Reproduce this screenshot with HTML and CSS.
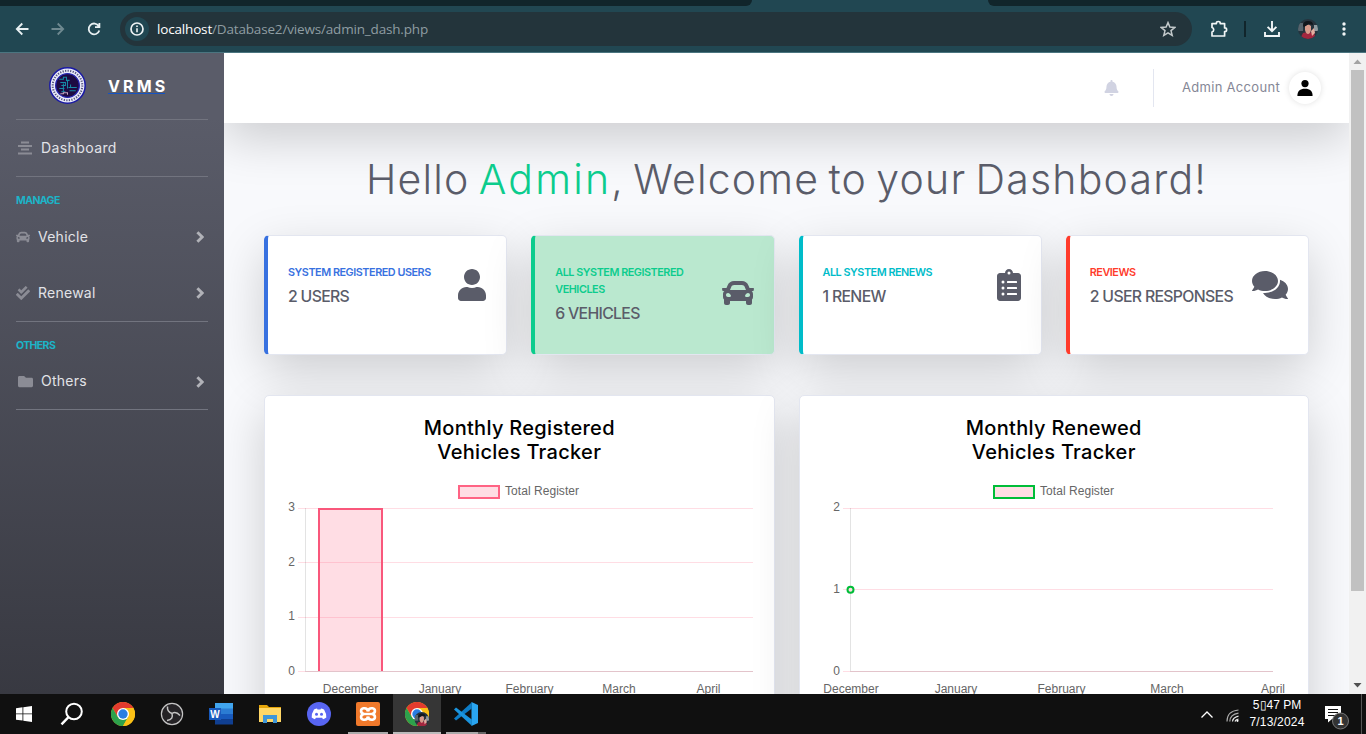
FILE: index.html
```html
<!DOCTYPE html>
<html lang="en">
<head>
<meta charset="utf-8">
<title>VRMS Dashboard</title>
<link rel="stylesheet" href="styles.css">
</head>
<body>
<svg class="defs" aria-hidden="true">
  <defs>
    <symbol id="car" viewBox="0 0 512 512"><path d="M499.99 176h-59.87l-16.64-41.6C406.38 91.63 365.57 64 319.5 64h-127c-46.06 0-86.88 27.63-103.99 70.4L71.87 176H12.01C4.2 176-1.53 183.34.37 190.91l6 24C7.7 220.25 12.5 224 18.01 224h20.07C24.65 235.73 16 252.78 16 272v48c0 16.12 6.16 30.67 16 41.93V416c0 17.67 14.33 32 32 32h32c17.67 0 32-14.33 32-32v-32h256v32c0 17.67 14.33 32 32 32h32c17.67 0 32-14.33 32-32v-54.07c9.84-11.25 16-25.8 16-41.93v-48c0-19.22-8.65-36.27-22.07-48H494c5.51 0 10.31-3.75 11.64-9.09l6-24c1.89-7.57-3.84-14.91-11.65-14.91zm-352.06-17.83c7.29-18.22 24.94-30.17 44.57-30.17h127c19.63 0 37.28 11.95 44.57 30.17L384 208H128l19.93-49.83zM96 319.8c-19.2 0-32-12.76-32-31.9S76.8 256 96 256s48 28.71 48 47.85-28.8 15.95-48 15.95zm320 0c-19.2 0-48 3.19-48-15.95S396.8 256 416 256s32 12.76 32 31.9-12.8 31.9-32 31.9z"/></symbol>
    <symbol id="chev" viewBox="0 0 8 12"><path d="M1.4 1.2 6.2 6 1.4 10.8" fill="none" stroke="currentColor" stroke-width="2.9"/></symbol>
    <symbol id="chrome" viewBox="0 0 48 48">
      <circle cx="24" cy="24" r="24" fill="#fbc116"/>
      <path d="M3.2 12A24 24 0 0 1 44.8 12L24 12 24 24 13.6 30Z" fill="#e33b2e"/>
      <path d="M3.2 12A24 24 0 0 0 24 48L34.4 30 24 24 13.6 30Z" fill="#2da14c"/>
      <path d="M44.8 12H24v12l10.4 6L24 48A24 24 0 0 0 44.8 12Z" fill="#fbc116"/>
      <circle cx="24" cy="24" r="12" fill="#fff"/><circle cx="24" cy="24" r="9.4" fill="#2a7de1"/>
    </symbol>
    <symbol id="face" viewBox="0 0 20 20">
      <clipPath id="fc"><circle cx="10" cy="10" r="10"/></clipPath>
      <g clip-path="url(#fc)"><rect width="20" height="20" fill="#26333d"/><path d="M0 4h5v8H0z" fill="#56646d"/><path d="M16 6h4v6h-4z" fill="#8f9ba1"/><path d="M2 20 5 14l5-1 6 1 2 6z" fill="#a3263f"/><path d="M7 7q3-3 6 0v4q-1 4-3 4t-3-4z" fill="#d99b8c"/><path d="M5 7q0-5 5-5t5 4l-4-1-5 3z" fill="#11161c"/><path d="M13 12l3-3 1 5-3 3z" fill="#e5ada0"/></g>
    </symbol>
  </defs>
</svg>

<header class="browser">
  <div class="tabstrip"><div class="tab-left"></div><div class="tab-right"></div></div>
  <div class="toolbar">
    <svg class="tool back" viewBox="0 0 14 14"><path d="M13.5 7H2M7.3 1.5 1.8 7l5.5 5.5" stroke="#e8f0f2"/></svg>
    <svg class="tool fwd" viewBox="0 0 14 14"><path d="M.5 7H12M6.7 1.5 12.2 7l-5.5 5.5" stroke="#6f8990"/></svg>
    <svg class="tool reload" viewBox="0 0 14 14"><path d="M11.8 4.2A5.4 5.4 0 1 0 12.3 8.5M12.4 1v4.2H8" stroke="#e8f0f2"/></svg>
    <div class="omnibox">
      <span class="info"><svg viewBox="0 0 14 14"><circle cx="7" cy="7" r="6" fill="none" stroke="#eef3f4" stroke-width="1.7"/><path d="M7 6.2v4M7 3.4v1.5" stroke="#eef3f4" stroke-width="1.6"/></svg></span>
      <span class="url"><b>localhost</b>/Database2/views/admin_dash.php</span>
      <svg class="star" viewBox="0 0 16 16"><path d="m8 1.6 1.9 4.5 4.8.4-3.7 3.1 1.2 4.8L8 11.8l-4.2 2.6L5 9.6 1.3 6.5l4.8-.4z" fill="none" stroke="#c3c9cb" stroke-width="1.5"/></svg>
    </div>
    <svg class="puzzle" viewBox="0 0 18 18"><path d="M2 3.600h4.400V3a1.900 1.500 0 0 1 3.800 0v.6h4.400v4.300h.5a1.500 1.800 0 0 1 0 3.600h-.5V16H2v-3.900a2.400 2.400 0 0 0 0-4.600z" fill="none" stroke="#f1f5f6" stroke-width="1.700" stroke-linejoin="round"/></svg>
    <span class="sep"></span>
    <svg class="download" viewBox="0 0 16 16"><path d="M8 0v10M3.6 5.8 8 10.2l4.4-4.4M1 11v4h14v-4" fill="none" stroke="#f1f5f6" stroke-width="1.9"/></svg>
    <svg class="avatar"><use href="#face"/></svg>
    <svg class="dots" viewBox="0 0 4 14"><circle cx="2" cy="2" r="1.7"/><circle cx="2" cy="7" r="1.7"/><circle cx="2" cy="12" r="1.7"/></svg>
  </div>
</header>

<div class="page">
  <nav class="sidebar">
    <a class="brand">
      <svg class="seal" viewBox="0 0 36 36"><circle cx="18" cy="18" r="17.2" fill="#e9eafa" stroke="#1a1aa5" stroke-width="1.5"/><circle cx="18" cy="18" r="14.4" fill="none" stroke="#55557c" stroke-width="2" stroke-dasharray="1.2 1.3"/><circle cx="18" cy="18" r="11.5" fill="#1d0b42" stroke="#2323b0" stroke-width="1.3"/><path d="M10 12h4v-2h3v3h3M11 15h5v3h-4M14 16v8M18 13v8M10 21h5M19 20h8M20 23h6M21 17v3h3M12 24h4" fill="none" stroke="#178aa5" stroke-width="1"/><path d="M11 26h3v-1h4v2" fill="none" stroke="#c8a5bd"/></svg>
      <span class="brand-text">VRMS</span>
    </a>
    <hr>
    <a class="item wide"><svg viewBox="0 0 14 14"><path d="M3 1.5h8M0 5h14M3 8.5h8M0 12.5h14" stroke="currentColor" stroke-width="1.8"/></svg><span class="dash">Dashboard</span></a>
    <hr>
    <div class="heading">MANAGE</div>
    <a class="item"><svg><use href="#car"/></svg><span>Vehicle</span><svg class="chev"><use href="#chev"/></svg></a>
    <a class="item"><svg viewBox="0 0 512 512"><path d="M505 174.8l-39.6-39.6c-9.4-9.4-24.6-9.4-33.9 0L192 374.7 80.6 263.2c-9.4-9.4-24.6-9.4-33.9 0L7 302.9c-9.4 9.4-9.4 24.6 0 34L175 505c9.4 9.4 24.6 9.4 33.9 0l296-296.2c9.4-9.5 9.4-24.7.1-34zm-324.3 106c6.2 6.3 16.4 6.3 22.6 0l208-208.2c6.2-6.3 6.2-16.4 0-22.6L366.1 4.7c-6.2-6.3-16.4-6.3-22.6 0L192 156.2l-55.4-55.5c-6.2-6.3-16.4-6.3-22.6 0L68.7 146c-6.2 6.3-6.2 16.4 0 22.6l112 112.2z"/></svg><span>Renewal</span><svg class="chev"><use href="#chev"/></svg></a>
    <hr>
    <div class="heading">OTHERS</div>
    <a class="item wide last"><svg viewBox="0 0 512 512"><path d="M464 128H272l-64-64H48C21.49 64 0 85.49 0 112v288c0 26.51 21.49 48 48 48h416c26.51 0 48-21.49 48-48V176c0-26.51-21.49-48-48-48z"/></svg><span>Others</span><svg class="chev"><use href="#chev"/></svg></a>
    <hr>
  </nav>

  <main class="content">
    <div class="topbar">
      <svg class="bell" viewBox="0 0 448 512"><path d="M224 512c35.32 0 63.97-28.65 63.97-64H160.03c0 35.35 28.65 64 63.97 64zm215.39-149.71c-19.32-20.76-55.47-51.99-55.47-154.29 0-77.7-54.48-139.9-127.94-155.16V32c0-17.67-14.32-32-31.98-32s-31.98 14.33-31.98 32v20.84C118.56 68.1 64.08 130.3 64.08 208c0 102.3-36.15 133.53-55.47 154.29-6 6.45-8.66 14.16-8.61 21.71.11 16.4 12.98 32 32.1 32h383.8c19.12 0 32-15.6 32.1-32 .05-7.55-2.61-15.27-8.61-21.71z"/></svg>
      <span class="divider"></span>
      <span class="account">Admin Account</span>
      <span class="user-pic"><svg viewBox="0 0 16 16"><circle cx="8" cy="3.6" r="3.6"/><path d="M.4 16c0-5 2.5-7.2 7.6-7.2s7.6 2.2 7.6 7.2z"/></svg></span>
    </div>

    <div class="body">
      <h1>Hello <em>Admin</em>, Welcome to your Dashboard!</h1>

      <section class="stats">
        <article class="card stat blue">
          <div><p class="label">SYSTEM REGISTERED USERS</p><p class="value">2 USERS</p></div>
          <svg class="i-user" viewBox="0 0 448 512"><path d="M224 256c70.7 0 128-57.3 128-128S294.7 0 224 0 96 57.3 96 128s57.3 128 128 128zm89.6 32h-16.7c-22.2 10.2-46.9 16-72.9 16s-50.6-5.8-72.9-16h-16.7C60.2 288 0 348.2 0 422.4V464c0 26.5 21.5 48 48 48h352c26.5 0 48-21.5 48-48v-41.6c0-74.2-60.2-134.4-134.4-134.4z"/></svg>
        </article>
        <article class="card stat green">
          <div><p class="label">ALL SYSTEM REGISTERED<br>VEHICLES</p><p class="value">6 VEHICLES</p></div>
          <svg class="i-car"><use href="#car"/></svg>
        </article>
        <article class="card stat cyan">
          <div><p class="label">ALL SYSTEM RENEWS</p><p class="value">1 RENEW</p></div>
          <svg class="i-clip" viewBox="0 0 384 512"><path d="M336 64h-80c0-35.3-28.7-64-64-64s-64 28.7-64 64H48C21.5 64 0 85.5 0 112v352c0 26.5 21.5 48 48 48h288c26.5 0 48-21.5 48-48V112c0-26.5-21.5-48-48-48z"/><g fill="#fff"><circle cx="192" cy="64" r="24"/><circle cx="96" cy="208" r="24"/><circle cx="96" cy="304" r="24"/><circle cx="96" cy="400" r="24"/><rect x="160" y="192" width="160" height="32" rx="8"/><rect x="160" y="288" width="160" height="32" rx="8"/><rect x="160" y="384" width="160" height="32" rx="8"/></g></svg>
        </article>
        <article class="card stat red">
          <div><p class="label">REVIEWS</p><p class="value">2 USER RESPONSES</p></div>
          <svg class="i-chat" viewBox="0 0 576 512"><path d="M416 192c0-88.4-93.1-160-208-160S0 103.6 0 192c0 34.3 14.1 65.9 38 92-13.4 30.2-35.5 54.2-35.8 54.5-2.2 2.3-2.8 5.7-1.5 8.7S4.8 352 8 352c36.6 0 66.9-12.3 88.7-25 32.2 15.7 70.3 25 111.3 25 114.9 0 208-71.6 208-160zm122 220c23.9-26 38-57.7 38-92 0-66.9-53.5-124.2-129.3-148.1.9 6.6 1.3 13.3 1.3 20.1 0 105.9-107.7 192-240 192-10.8 0-21.3-.8-31.7-1.9C207.8 439.6 281.8 480 368 480c41 0 79.1-9.2 111.3-25 21.8 12.7 52.1 25 88.7 25 3.2 0 6.1-1.9 7.3-4.8 1.3-2.9.7-6.3-1.5-8.7-.3-.3-22.4-24.2-35.8-54.5z"/></svg>
        </article>
      </section>

      <section class="charts">
        <article class="card chart">
          <h2>Monthly Registered<br>Vehicles Tracker</h2>
          <svg class="plot" viewBox="265 464 509 240">
            <rect x="459" y="486" width="40" height="12" fill="#ffdde4" stroke="#ff6384" stroke-width="2"/>
            <text x="505" y="495" textLength="74">Total Register</text>
            <g class="grid"><path d="M298 508.5H753M298 562.5H753M298 617.5H753M298 671.5H753"/></g>
            <path class="axis" d="M305.5 508V671.5H753"/>
            <rect x="318" y="508" width="65" height="163" fill="#ff6384" fill-opacity=".22"/>
            <path d="M319 671V509H382V671" fill="none" stroke="#f9577b" stroke-width="2"/>
            <g class="end"><text x="295" y="511">3</text><text x="295" y="566">2</text><text x="295" y="620">1</text><text x="295" y="675">0</text></g>
            <g class="mid"><text x="350.5" y="693">December</text><text x="440" y="693">January</text><text x="529.5" y="693">February</text><text x="619" y="693">March</text><text x="708.5" y="693">April</text></g>
          </svg>
        </article>
        <article class="card chart">
          <h2>Monthly Renewed<br>Vehicles Tracker</h2>
          <svg class="plot" viewBox="800 464 509 240">
            <rect x="994" y="486" width="40" height="12" fill="#ffdde4" stroke="#00bd38" stroke-width="2"/>
            <text x="1040" y="495" textLength="74">Total Register</text>
            <g class="grid"><path d="M843 508.5H1273M843 589.5H1273M843 671.5H1273"/></g>
            <path class="axis" d="M850.5 508V671.5H1273"/>
            <circle cx="850.5" cy="589.7" r="3" fill="#ffdde4" stroke="#00bd38" stroke-width="2"/>
            <g class="end"><text x="840" y="511">2</text><text x="840" y="593">1</text><text x="840" y="675">0</text></g>
            <g class="mid"><text x="851" y="693">December</text><text x="956" y="693">January</text><text x="1061.5" y="693">February</text><text x="1167" y="693">March</text><text x="1273" y="693">April</text></g>
          </svg>
        </article>
      </section>
    </div>
  </main>

  <div class="scrollbar">
    <svg class="arrow" viewBox="0 0 17 17"><path d="M4.5 11 8.5 6.5 12.5 11z" fill="#a3a3a3"/></svg>
    <div class="thumb"></div>
    <svg class="arrow" viewBox="0 0 17 17"><path d="M4.5 6 8.5 10.5 12.5 6z" fill="#505050"/></svg>
  </div>
</div>

<footer class="taskbar">
  <div class="app start"><svg width="16" height="16" viewBox="0 0 16 16"><path d="M0 2.2 6.5 1.3V7.5H0zM7.3 1.2 16 0V7.5H7.3zM0 8.3H6.5V14.6L0 13.7zM7.3 8.3H16V16L7.3 14.8z" fill="#fff"/></svg></div>
  <div class="app search"><svg width="24" height="24" viewBox="0 0 24 24"><circle cx="14" cy="9.5" r="7.8" fill="none" stroke="#fff" stroke-width="2"/><path d="M8.5 15.2 1.5 22.4" stroke="#fff" stroke-width="2.4"/></svg></div>
  <div class="app"><svg width="24" height="24"><use href="#chrome"/></svg></div>
  <div class="app"><svg width="24" height="24" viewBox="0 0 24 24"><circle cx="12" cy="12" r="10.6" fill="#252326" stroke="#c4c4c4" stroke-width="1.2"/><g fill="none" stroke="#c4c4c4" stroke-width="1.5"><path d="M7.5 4.5C7 9 9 10.5 12 11.5"/><path d="M20 13.5C17 10 14 10 12 11.5"/><path d="M7 18.5c5-.5 6-3.5 5-7"/></g></svg></div>
  <div class="app"><svg width="24" height="22" viewBox="0 0 24 22"><path fill="#41a5ee" d="M6 0h18v6H6z"/><path fill="#2b7cd3" d="M6 5.5h18V11H6z"/><path fill="#185abd" d="M6 11h18v5.500H6z"/><path fill="#103f91" d="M6 16h18v5.500H6z"/><path fill="#185abd" d="M0 5h12v12H0z"/><text x="6" y="14.500" text-anchor="middle" class="word-w">W</text></svg></div>
  <div class="app"><svg width="22" height="20" viewBox="0 0 22 20"><path fill="#e5a50a" d="M0 1h8l2 2H22V6H0z"/><path fill="#ffd766" d="M0 4h22v14H0z"/><path fill="#3f96d8" d="M4 11h14v8h-4v-4H8v4H4z"/></svg></div>
  <div class="app"><svg width="24" height="24" viewBox="0 0 24 24"><circle cx="12" cy="12" r="12" fill="#5865f2"/><path fill="#fff" d="M7 7.500q2-1 3-1l.5 1h3l.5-1q1 0 3 1 2.500 4 2.300 8-1.500 1.200-3.300 1.700l-.9-1.500h-6.200L8 17.200q-1.800-.5-3.300-1.700Q4.500 11.500 7 7.500z"/><circle cx="9.500" cy="12.300" r="1.500" fill="#5865f2"/><circle cx="14.500" cy="12.300" r="1.500" fill="#5865f2"/></svg></div>
  <div class="app running"><svg width="24" height="24" viewBox="0 0 24 24"><rect width="24" height="24" rx="2" fill="#f0792b"/><g fill="none" stroke="#fff" stroke-width="2.600"><path d="M12 9.500C11.500 6.500 9.500 6 7.500 6.300 4.500 6.800 4 10.500 7.500 12 4 13.500 4.500 17.200 7.500 17.700 9.500 18 11.500 17.500 12 14.500M12 9.500C12.500 6.500 14.500 6 16.500 6.300 19.500 6.800 20 10.500 16.500 12 20 13.500 19.500 17.200 16.500 17.700 14.500 18 12.500 17.500 12 14.500"/><path d="M7.500 12h9" stroke-width="2.400"/></g></svg></div>
  <div class="app active"><svg width="24" height="24" viewBox="0 0 24 24"><use href="#chrome" width="24" height="24"/><use href="#face" x="9.500" y="10" width="14.500" height="14.500"/></svg></div>
  <div class="app running code"><svg width="24" height="24" viewBox="0 0 24 24"><path d="M17.500 0 24 3v18l-6.500 3z" fill="#2aa5f0"/><path d="M17.800.3v6.200L2 18.500 0 16.500z" fill="#0d7cc6"/><path d="M17.800 23.700v-6.200L2 5.500 0 7.500z" fill="#1a94de"/></svg></div>
  <div class="tray">
    <svg width="14" height="9" viewBox="0 0 14 9"><path d="M1.500 7.500 7 2l5.500 5.500" fill="none" stroke="#fff" stroke-width="1.300"/></svg>
    <svg class="wifi" width="13" height="13" viewBox="0 0 13 13"><g fill="none" stroke-width="1.200"><path d="M1 12.500Q1 2 12.500 1M3.800 12.500Q4 5.500 12.500 4.200" stroke="#aaa"/><path d="M6.500 12.500Q6.800 8.500 12.500 7.200M9 12.500Q9.500 10.500 12.500 10" stroke="#eee"/></g><circle cx="11.500" cy="11.800" r="1.100" fill="#fff"/></svg>
    <div class="clock"><span>5<i>▯</i>47 PM</span><span class="date">7/13/2024</span></div>
    <div class="notify"><svg width="26" height="26" viewBox="0 0 26 26"><path d="M1 2h16v13H8l-4 3.500V15H1z" fill="#fff"/><path d="M4 5.500h10M4 8.500h10M4 11.500h7" stroke="#111"/><circle cx="16.500" cy="17" r="8" fill="#333" stroke="#777"/><text x="16.500" y="21" text-anchor="middle" class="count">1</text></svg></div>
    <span class="peek"></span>
  </div>
</footer>
</body>
</html>
```

FILE: styles.css
```css
* { box-sizing: border-box; }
body { margin: 0; width: 1366px; height: 734px; overflow: hidden; display: flex; flex-direction: column; font-family: Inter, "Open Sans", sans-serif; background: #f8f9fc; }
svg { display: block; flex: none; }
p, h1, h2 { margin: 0; }
.defs { position: absolute; width: 0; height: 0; }

/* browser chrome */
.browser { height: 53px; background: #214752; border-bottom: 1px solid #4b7580; flex: none; }
.tabstrip { height: 6px; display: flex; justify-content: space-between; background: #214752; }
.tab-left { width: 752px; background: #11252b; border-bottom-right-radius: 8px; }
.tab-right { width: 378px; background: #11252b; border-bottom-left-radius: 8px; }
.toolbar { height: 46px; display: flex; align-items: center; }
.tool { fill: none; stroke-width: 1.8; width: 14px; height: 14px; }
.back { margin-left: 15px; }
.fwd { margin-left: 22px; }
.reload { margin-left: 22px; }
.omnibox { margin-left: 19px; width: 1072px; height: 34px; border-radius: 17px; background: #23343b; display: flex; align-items: center; padding: 0 16px 0 5px; }
.info { width: 24px; height: 24px; border-radius: 50%; background: #214752; display: grid; place-items: center; }
.info svg { width: 14px; height: 14px; }
.url { margin-left: 8px; font: 13.5px "Open Sans", "Noto Sans", sans-serif; color: #8f9da2; letter-spacing: -.17px; }
.url b { font-weight: 400; color: #fff; }
.star { width: 16px; height: 16px; margin-left: auto; }
.puzzle { width: 18px; height: 18px; margin-left: 18px; }
.sep { width: 2px; height: 16px; background: #11252b; margin-left: 16px; }
.download { width: 16px; height: 16px; margin-left: 18px; }
.avatar { width: 20px; height: 20px; margin-left: 18px; }
.dots { width: 4px; height: 14px; margin-left: 24px; fill: #f1f5f6; }

.page { height: 641px; display: flex; overflow: hidden; flex: none; }

/* sidebar */
.sidebar { width: 224px; padding: 0 16px; flex: none; background: linear-gradient(180deg, #5a5c69 10%, #36373f 105%); color: #e2e3e7; }
.sidebar hr { height: 1px; border: 0; margin: 0; background: #72747f; }
.brand { height: 66px; display: flex; align-items: center; padding-left: 33px; padding-bottom: 1px; }
.seal { width: 37px; height: 37px; }
.brand-text { margin-left: 22px; width: 57px; height: 16px; font-size: 16px; line-height: 16px; font-weight: 700; letter-spacing: 3.1px; color: #fff; border-bottom: 1px solid #1453c4; }
.item { height: 56px; display: flex; align-items: center; font-size: 14px; letter-spacing: .25px; color: #e2e3e7; }
.item span { padding-bottom: 1.5px; }
.dash { letter-spacing: .4px; }
.item svg { width: 14px; height: 14px; fill: #8b8c95; color: #8b8c95; margin-right: 8px; }
.item.wide svg { margin: 0 9px 0 2px; }
.item.last { height: 55px; }
.item.last svg:first-child { width: 15px; height: 15px; margin: 0 8px 0 2px; }
.item .chev, .item.wide .chev { width: 8px; height: 12px; color: #b1b2b8; margin: 0 4px 0 auto; }
.heading { height: 32px; padding-top: 16px; font-size: 10.5px; line-height: 15px; font-weight: 700; letter-spacing: -.6px; color: #1cb4c8; }

/* main column */
.content { width: 1125px; overflow: hidden; background: #f8f9fc; }
.topbar { height: 70px; background: #fff; box-shadow: 0 16px 48px rgba(0,0,0,.175); display: flex; align-items: center; justify-content: flex-end; padding-right: 28px; }
.bell { width: 15px; height: 16px; fill: #d1d3e2; }
.divider { width: 1px; height: 38px; background: #e3e6f0; margin: 0 28px 0 34px; }
.account { font-size: 13px; color: #858796; width: 99px; white-space: nowrap; letter-spacing: .3px; padding-bottom: 2px; }
.user-pic { width: 32px; height: 32px; margin-left: 8px; border-radius: 50%; display: grid; place-items: center; background: #fff; box-shadow: 0 0 6px rgba(0,0,0,.12); }
.user-pic svg { width: 16px; height: 16px; }
.body { padding: 32px 40px 0; }
h1 { height: 48px; line-height: 48px; font-size: 41px; font-weight: 300; color: #5a5c69; text-align: center; white-space: nowrap; letter-spacing: 1.2px; word-spacing: -3.5px; }
h1 em { font-style: normal; color: #0ccc8d; letter-spacing: 2.2px; }
.card { background: #fff; border: 1px solid #e3e6f0; border-radius: 5px; box-shadow: 0 16px 48px rgba(0,0,0,.175); }
.stats { margin-top: 32px; display: grid; grid-template-columns: repeat(4, 1fr); gap: 24px; }
.stat { height: 120px; min-width: 0; padding: 28px 20px 0; border-left: 4px solid; display: flex; align-items: flex-start; justify-content: space-between; }
.stat div { white-space: nowrap; }
.label { font-size: 10.8px; line-height: 17px; font-weight: 600; letter-spacing: -.45px; }
.value { margin-top: 6px; font-size: 15.8px; line-height: 19px; font-weight: 500; color: #5a5c69; letter-spacing: -.67px; }
.stat svg { fill: #5a5c69; }
.blue { border-left-color: #3871e0; } .blue .label { color: #3871e0; }
.green { background: #bae8cf; border-left-color: #0ccc8d; } .green .label { color: #0ccc8d; }
.cyan { border-left-color: #00bcc9; } .cyan .label { color: #00bcc9; }
.red { border-left-color: #ff3b2b; } .red .label { color: #ff3b2b; }
.i-user { width: 28px; height: 32px; margin-top: 5px; }
.i-car { width: 32px; height: 32px; margin-top: 13px; }
.i-clip { width: 24px; height: 32px; margin-top: 5px; }
.i-chat { width: 36px; height: 32px; margin-top: 5px; }

.charts { margin-top: 40px; display: grid; grid-template-columns: 1fr 1fr; gap: 24px; }
.chart { height: 340px; padding-top: 20px; overflow: hidden; }
h2 { font-size: 20px; line-height: 24px; font-weight: 500; color: #000; text-align: center; letter-spacing: .3px; }
.plot { width: 509px; height: 240px; font: 12px "Liberation Sans", Arial, sans-serif; fill: #666; }
.grid { stroke: #ffdde4; fill: none; }
.axis { stroke: rgba(0,0,0,.11); fill: none; }
.end { text-anchor: end; }
.mid { text-anchor: middle; }

.scrollbar { width: 17px; background: #f1f1f1; display: flex; flex-direction: column; align-items: center; }
.arrow { width: 17px; height: 17px; }
.thumb { width: 13px; height: 521px; background: #c1c1c1; margin-bottom: 86px; }

/* taskbar */
.taskbar { height: 40px; background: #101010; display: flex; flex: none; }
.app { width: 49px; height: 40px; display: grid; place-items: center; flex: none; }
.start { padding-right: 2px; }
.search { padding-right: 4px; }
.running { background: linear-gradient(#aaa, #aaa) 5px 38px / 40px 2px no-repeat; }
.active { background: linear-gradient(#bbb, #bbb) 1px 38px / 48px 2px no-repeat, linear-gradient(#363636, #363636) 1px 0 / 48px 40px no-repeat; }
.code { background: linear-gradient(90deg, #aaa 80%, #666 80%) 5px 38px / 40px 2px no-repeat; }
.word-w { font: bold 10px "Liberation Sans", sans-serif; fill: #fff; }
.tray { margin-left: auto; display: flex; align-items: center; color: #fff; }
.wifi { margin-left: 12px; margin-top: 2px; }
.clock { width: 60px; margin-left: 8px; display: flex; flex-direction: column; text-align: center; font: 12px/17px "Liberation Sans", Arial, sans-serif; white-space: nowrap; margin-top: 0; }
.clock i { font-style: normal; font-size: 12px; line-height: 10px; }
.date { letter-spacing: .2px; }
.notify { margin-left: 17px; margin-top: 6px; }
.count { font: bold 11px "Liberation Sans", sans-serif; fill: #fff; }
.peek { width: 1px; height: 40px; background: #555; margin: 0 4px 0 11px; }
```
